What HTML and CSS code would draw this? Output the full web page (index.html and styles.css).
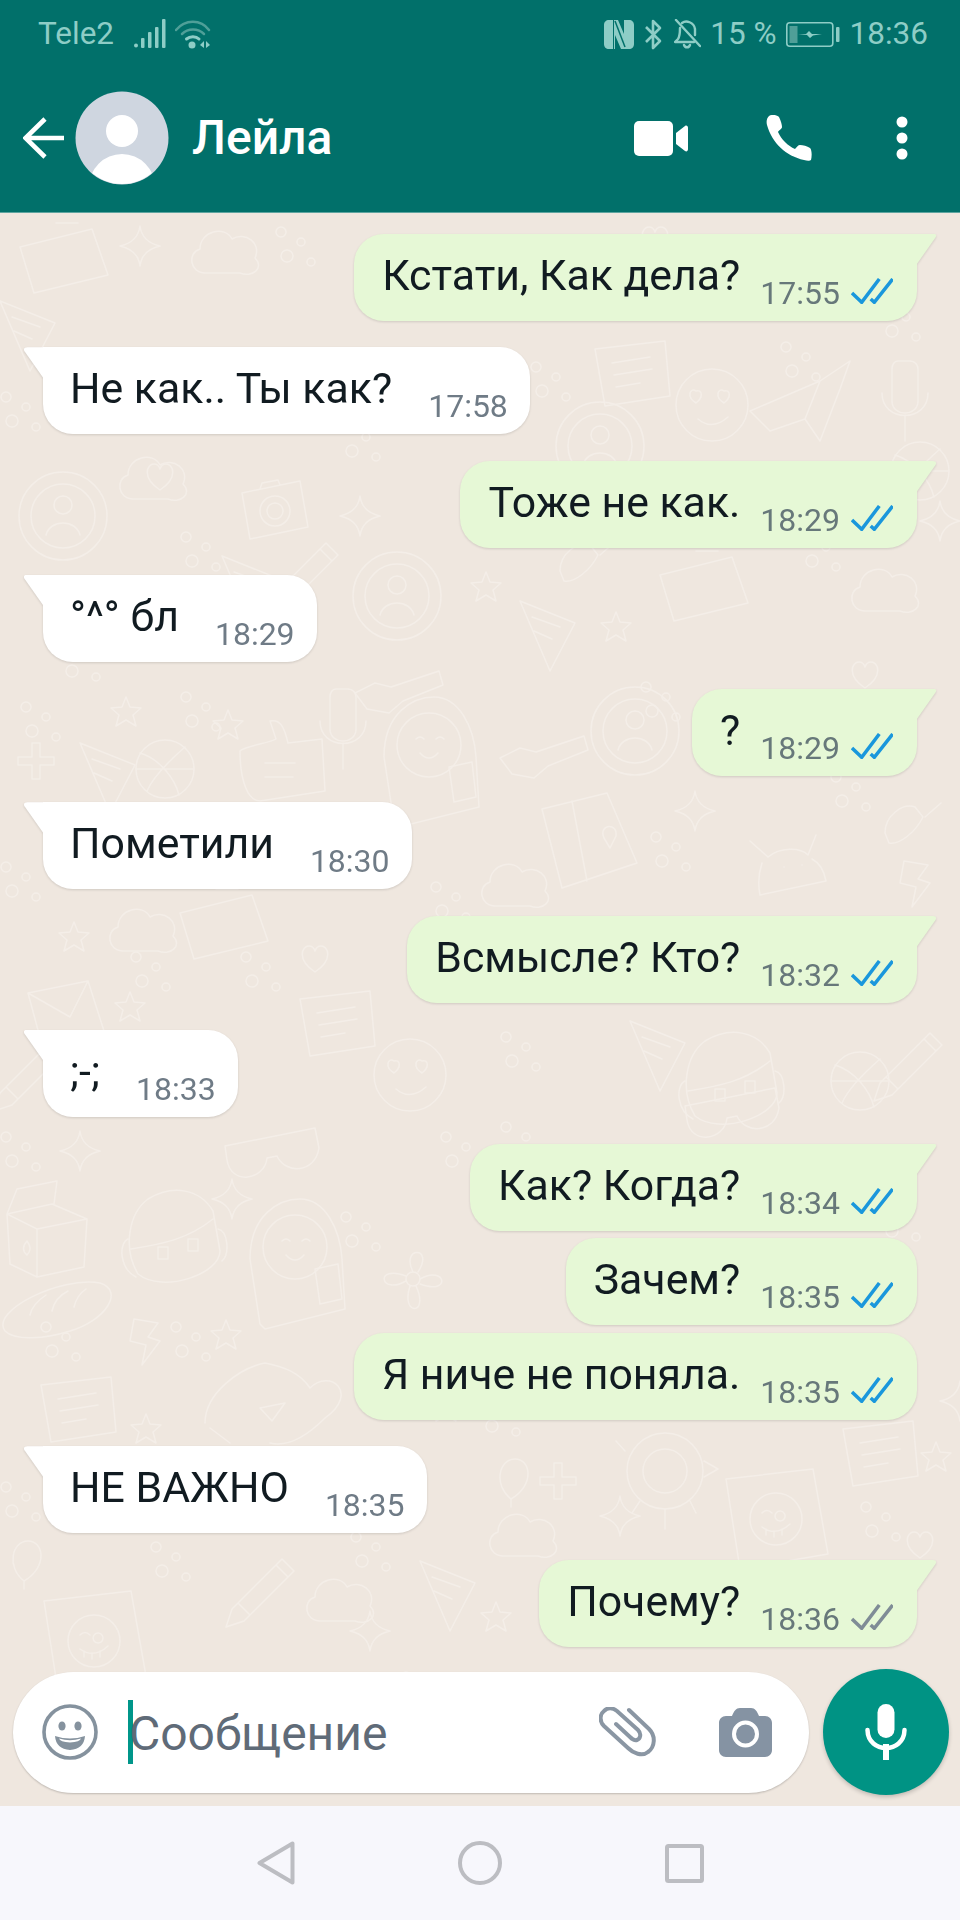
FILE: index.html
```html
<!DOCTYPE html>
<html lang="ru">
<head>
<meta charset="utf-8">
<title>Лейла</title>
<link rel="stylesheet" href="styles.css">
</head>
<body>
<div class="phone">
  <div class="topbar">
    <div class="status">
      <div class="status-left">
        <span>Tele2</span>
        <svg class="ic-signal" width="32" height="30" viewBox="0 0 32 30"><g fill="#8ecdc6"><circle cx="2" cy="26.500" r="2"/><rect x="7" y="19" width="3.500" height="10" rx="1"/><rect x="14" y="13" width="3.500" height="16" rx="1"/><rect x="21" y="8" width="3.500" height="21" rx="1"/><rect x="28" y="0" width="3.500" height="29" rx="1"/></g></svg>
        <svg class="ic-wifi" width="36" height="30" viewBox="0 0 36 30"><g fill="none" stroke-linecap="round"><path d="M1 11 C10 0 26 0 34 11" stroke="#4f9f98" stroke-width="2.500"/><path d="M7 15 C13 9 23 9 29 15" stroke="#4f9f98" stroke-width="2.500"/><path d="M11.500 20 C15 17 21 17 24 20" stroke="#8ecdc6" stroke-width="3"/></g><circle cx="17" cy="26" r="3.500" fill="#8ecdc6"/><path d="M29 22 V29 L25 26 Z M31 29 V22 L35 26 Z" fill="#8ecdc6"/></svg>
      </div>
      <div class="status-right">
        <svg class="ic-nfc" width="30" height="29" viewBox="0 0 30 29"><path d="M5 0 H9 V29 H5 C2 29 0 27 0 24 V5 C0 2 2 0 5 0Z M21 0 H25 C28 0 30 2 30 5 V24 C30 27 28 29 25 29 H21Z" fill="#8ecdc6"/><path d="M10 0 H14 L20 14 V0 H21 V29 H17 L11 15 V29 H10Z" fill="#8ecdc6"/><path d="M11 1 L21 27" stroke="#01706a" stroke-width="1.500"/></svg>
        <svg class="ic-bt" width="19" height="31" viewBox="0 0 19 31"><path d="M2 8 L16 22 L9 29 V2 L16 9 L2 23" fill="none" stroke="#8ecdc6" stroke-width="2.600" stroke-linejoin="round"/></svg>
        <svg class="ic-bell" width="27" height="30" viewBox="0 0 27 30"><g fill="none" stroke="#8ecdc6" stroke-width="2.400" stroke-linecap="round" stroke-linejoin="round"><path d="M6 9 C6 13 6 17 4 20 L1 23 H20"/><path d="M8 4 C12 1 20 3 21 10 V16"/><path d="M2 1 L26 27"/><path d="M10 26 C11 29 15 29 16 26"/></g></svg>
        <span class="pct">15 %</span>
        <svg class="ic-batt" width="54" height="25" viewBox="0 0 54 25"><rect x="0.800" y="0.800" width="46" height="23.400" rx="3" fill="none" stroke="#8ecdc6" stroke-width="1.600"/><rect x="3.500" y="4" width="8" height="17" fill="#4f9f98"/><path d="M12 12 H20 L23 9 L26 12 H36 L27 13.500 L24 16 L21 13 Z" fill="#8ecdc6"/><rect x="50" y="5" width="3.500" height="15" rx="1" fill="#8ecdc6"/></svg>
        <span>18:36</span>
      </div>
    </div>
    <header class="header">
      <svg class="ic-back" width="42" height="42" viewBox="0 0 42 42"><path d="M41 21 H3 M22 2 L2.500 21 L22 40" fill="none" stroke="#fff" stroke-width="4.600"/></svg>
      <svg class="avatar" width="94" height="94" viewBox="0 0 94 94"><defs><clipPath id="avclip"><circle cx="47" cy="47" r="46"/></clipPath></defs><circle cx="47" cy="47" r="46.500" fill="#cfd6e0"/><g clip-path="url(#avclip)" fill="#fff"><circle cx="47" cy="40" r="16"/><ellipse cx="47" cy="96" rx="33" ry="33"/></g></svg>
      <div class="name">Лейла</div>
      <svg class="ic-video" width="54" height="35" viewBox="0 0 54 35"><rect width="39" height="35" rx="5" fill="#fff"/><path d="M42 12 L51 5 C52.500 4 54 5 54 7 V28 C54 30 52.500 31 51 30 L42 23 Z" fill="#fff"/></svg>
      <svg class="ic-call" width="46" height="46" viewBox="0 0 46 46"><path d="M3 1 C6 -1 11 0 13 2 C15 6 16 10 16 12 C16 14 13 15 12 17 C15 24 22 31 29 34 C31 32 32 30 34 30 C37 30 41 31 44 33 C46 35 46 41 45 45 C44 46 41 46 38 45 C20 41 6 28 1 10 C0 6 1 3 3 1 Z" fill="#fff"/></svg>
      <svg class="ic-more" width="12" height="44" viewBox="0 0 12 44"><g fill="#fff"><circle cx="6" cy="6" r="5.500"/><circle cx="6" cy="22" r="5.500"/><circle cx="6" cy="38" r="5.500"/></g></svg>
    </header>
  </div>

  <main class="chat">
    <svg class="wallpaper" width="960" height="1594" viewBox="0 212 960 1594" aria-hidden="true">
      <defs>
        <path id="d-star" d="M16 1 L20 11 L31 12 L23 19 L26 30 L16 24 L6 30 L9 19 L1 12 L12 11Z"/>
        <path id="d-spark" d="M20 0 Q22 16 40 20 Q22 24 20 40 Q18 24 0 20 Q18 16 20 0Z"/>
        <path id="d-heart" d="M15 27 C-4 14 2 1 9 1 C12 1 14 3 15 6 C16 3 18 1 21 1 C28 1 34 14 15 27Z"/>
        <path id="d-cloud" d="M15 50 C0 50 -3 30 10 26 C10 8 35 2 42 16 C55 8 72 20 65 35 C75 45 62 55 50 50 Z"/>
        <path id="d-bolt" d="M4 0 L28 4 L18 18 L30 22 L12 46 L16 26 L0 22Z"/>
        <g id="d-dots"><circle cx="6" cy="6" r="5"/><circle cx="26" cy="16" r="4"/><circle cx="12" cy="30" r="6"/><circle cx="36" cy="36" r="4"/></g>
        <g id="d-carton"><path d="M5 35 L50 25 L85 40 L82 88 L35 98 L8 85Z M5 35 L35 50 L35 98 M35 50 L85 40 M15 10 L55 2 L52 25 M15 10 L5 35 M25 62 q6 8 0 14 q-7-6 0-14"/></g>
        <g id="d-pack"><path d="M10 85 C-5 60 0 25 20 10 C45 -5 72 0 85 22 L92 62 C92 85 35 105 10 85Z M0 50 C-10 55 -8 80 8 88 M90 40 C100 42 102 65 94 72 M3 60 C35 55 60 50 85 30"/><path d="M30 58 h10 v12 h-10z M60 50 h10 v12 h-10z"/></g>
        <g id="d-girl"><path d="M10 125 L0 60 C0 15 30 0 50 0 C75 0 90 30 92 60 L95 110 L15 130Z"/><circle cx="45" cy="48" r="32"/><path d="M32 42 q4-4 8 0 M52 42 q4-4 8 0 M36 56 q9 10 18 0"/><path d="M65 70 L88 65 L92 100 L70 105Z"/></g>
        <g id="d-flower"><circle cx="33" cy="33" r="7"/><path d="M33 26 C20 0 55 0 38 26 M40 33 C66 18 72 50 40 38 M36 40 C50 70 20 70 30 40 M26 35 C0 50 -6 18 26 30"/></g>
        <g id="d-bread"><path d="M5 50 C-10 30 60 -5 100 2 C125 10 105 40 70 50 C45 58 15 60 5 50Z M30 34 C32 24 40 18 46 14 M52 30 C54 20 60 14 68 10 M74 26 C76 18 80 12 86 8"/></g>
        <g id="d-note"><path d="M5 8 L75 0 L80 55 L15 65Z M22 22 L60 16 M24 34 L62 28 M26 46 L50 42"/></g>
        <g id="d-book"><path d="M0 16 L65 0 L95 70 L20 95Z M30 8 L45 88"/><path d="M62 45 c-6 -14 14 -16 12 -2 l-6 12z"/></g>
        <g id="d-thumb"><path d="M0 30 C5 25 30 22 36 18 L30 0 C40 -2 44 5 48 22 L82 18 L85 70 L20 80 C8 80 0 60 0 30Z M25 42 h30 M25 56 h28"/></g>
        <g id="d-mic"><path d="M18 0 h12 c5 0 8 4 8 8 v32 c0 16 -26 16 -26 0 v-32 c0 -4 2 -8 6 -8z"/><path d="M2 32 C2 62 48 62 48 32 M25 54 V80"/></g>
        <g id="d-plate"><circle cx="45" cy="45" r="44"/><circle cx="45" cy="45" r="32"/><circle cx="45" cy="34" r="9"/><path d="M28 64 C32 48 58 48 62 64"/></g>
        <g id="d-camera"><path d="M2 14 L60 2 L68 48 L10 60Z M20 10 L22 4 L38 1 L40 6"/><circle cx="35" cy="32" r="15"/><circle cx="35" cy="32" r="8"/></g>
        <g id="d-pencil"><path d="M0 52 L50 2 L62 14 L12 64 L-6 70Z M44 8 L56 20 M6 46 L18 58"/></g>
        <g id="d-heartface"><circle cx="40" cy="42" r="36"/><path d="M24 28 c-6 -4 -10 6 0 12 c8 -6 6 -14 0 -12z M52 28 c-6 -4 -10 6 0 12 c8 -6 6 -14 0 -12z M26 56 q14 12 30 -2"/></g>
        <g id="d-glasses"><path d="M0 20 L90 2 L94 22 C90 48 60 48 52 30 L42 32 C40 54 6 60 2 34Z"/></g>
        <g id="d-ball"><circle cx="30" cy="30" r="29"/><path d="M5 14 C25 20 40 40 44 56 M50 8 C34 22 18 38 12 52 M1 30 L58 30"/></g>
        <g id="d-turtle"><circle cx="45" cy="40" r="22"/><circle cx="45" cy="40" r="38"/><path d="M5 20 L-4 10 M84 30 L98 38 L84 46 M45 78 V98 M20 70 L12 82 M70 70 L76 82"/></g>
        <g id="d-frame"><path d="M8 10 L95 0 L110 85 L22 100Z"/><circle cx="58" cy="50" r="26"/><path d="M44 44 q5 -5 10 0 M62 42 a5 5 0 1 0 .1 0 M44 58 q14 10 28 -3 M48 60 v6 M56 62 v6 M64 60 v6"/></g>
        <g id="d-android"><path d="M0 0 L18 16 C30 6 50 6 58 14 L66 -6 M12 22 C8 34 8 44 10 54 L76 40 C74 30 70 22 62 18 M34 26 h.1 M52 24 h.1"/></g>
        <g id="d-envelope"><path d="M0 12 L60 0 L76 50 L14 64Z M0 12 L42 36 L60 0"/></g>
        <g id="d-mail"><path d="M0 24 L72 6 L88 52 L14 70Z M36 0 h22"/></g>
        <g id="d-balloon"><path d="M14 40 C-4 26 2 0 18 0 C34 0 38 26 14 40Z M14 40 V48"/></g>
        <g id="d-cross"><path d="M14 0 h8 v14 h14 v8 h-14 v14 h-8 v-14 h-14 v-8 h14z"/></g>
        <g id="d-hand"><path d="M5 60 C5 30 40 5 65 0 C85 4 100 10 110 25 C130 5 160 30 125 55 C110 70 90 85 70 80 M10 65 L30 80 M60 45 L85 40 L72 58Z"/></g>
        <g id="d-slice"><path d="M0 0 L55 22 L30 70 Z M12 16 L40 26 M14 30 L32 38"/></g>
        <g id="d-plane"><path d="M0 50 L70 20 L100 0 L90 28 L70 80 L55 58 L20 70Z M55 58 L70 20"/></g>
        <g id="d-key"><path d="M0 22 L20 12 L36 16 L84 0 L88 14 L48 30 L34 42 L12 38Z"/></g>
        <g id="d-brush"><path d="M0 30 C0 12 18 0 30 4 L38 14 C30 30 14 42 4 40Z M40 14 L56 0"/></g>
      </defs>
      <g class="doodles">
        <use href="#d-mail" x="20" y="222"/>
        <use href="#d-spark" x="120" y="225"/>
        <use href="#d-cloud" x="190" y="222"/>
        <use href="#d-dots" x="275" y="225"/>
        <use href="#d-star" x="420" y="235"/>
        <use href="#d-heart" x="640" y="225"/>
        <use href="#d-dots" x="780" y="340"/>
        <use href="#d-slice" x="0" y="300"/>
        <use href="#d-dots" x="0" y="390"/>
        <use href="#d-ball" x="890" y="440"/>
        <use href="#d-dots" x="340" y="420"/>
        <use href="#d-brush" x="560" y="540"/>
        <use href="#d-star" x="600" y="610"/>
        <use href="#d-dots" x="640" y="680"/>
        <use href="#d-dots" x="800" y="530"/>
        <use href="#d-heart" x="850" y="660"/>
        <use href="#d-cloud" x="850" y="560"/>
        <use href="#d-dots" x="430" y="880"/>
        <use href="#d-bolt" x="900" y="860"/>
        <use href="#d-dots" x="0" y="860"/>
        <use href="#d-pencil" x="0" y="1040"/>
        <use href="#d-dots" x="0" y="1130"/>
        <use href="#d-dots" x="440" y="1130"/>
        <use href="#d-dots" x="500" y="1120"/>
        <use href="#d-star" x="430" y="1390"/>
        <use href="#d-dots" x="480" y="1395"/>
        <use href="#d-star" x="920" y="1440"/>
        <use href="#d-dots" x="0" y="1480"/>
        <use href="#d-balloon" x="10" y="1540"/>
        <use href="#d-dots" x="150" y="1540"/>
        <use href="#d-star" x="480" y="1600"/>
        <use href="#d-carton" x="2" y="1178"/>
        <use href="#d-pack" x="128" y="1188"/>
        <use href="#d-girl" x="250" y="1198"/>
        <use href="#d-flower" x="380" y="1245"/>
        <use href="#d-bread" x="0" y="1280"/>
        <use href="#d-bolt" x="130" y="1318"/>
        <use href="#d-star" x="210" y="1318"/>
        <use href="#d-spark" x="212" y="1178"/>
        <use href="#d-note" x="36" y="1376"/>
        <use href="#d-hand" x="200" y="1362"/>
        <use href="#d-pencil" x="232" y="1556"/>
        <use href="#d-cloud" x="305" y="1570"/>
        <use href="#d-spark" x="350" y="1610"/>
        <use href="#d-frame" x="36" y="1590"/>
        <use href="#d-slice" x="420" y="1560"/>
        <use href="#d-star" x="130" y="1412"/>
        <use href="#d-dots" x="40" y="1320"/>
        <use href="#d-dots" x="340" y="1210"/>
        <use href="#d-dots" x="170" y="1320"/>
        <use href="#d-dots" x="350" y="1530"/>
        <use href="#d-star" x="110" y="695"/>
        <use href="#d-star" x="212" y="708"/>
        <use href="#d-slice" x="80" y="742"/>
        <use href="#d-ball" x="135" y="738"/>
        <use href="#d-mic" x="318" y="688"/>
        <use href="#d-thumb" x="240" y="720"/>
        <use href="#d-girl" x="384" y="696"/>
        <use href="#d-cross" x="18" y="742"/>
        <use href="#d-dots" x="20" y="700"/>
        <use href="#d-dots" x="180" y="690"/>
        <use href="#d-cloud" x="108" y="900"/>
        <use href="#d-mail" x="180" y="888"/>
        <use href="#d-star" x="58" y="920"/>
        <use href="#d-heart" x="300" y="944"/>
        <use href="#d-envelope" x="28" y="980"/>
        <use href="#d-star" x="114" y="990"/>
        <use href="#d-note" x="295" y="990"/>
        <use href="#d-heartface" x="370" y="1032"/>
        <use href="#d-dots" x="130" y="950"/>
        <use href="#d-dots" x="240" y="950"/>
        <use href="#d-glasses" x="225" y="1125"/>
        <use href="#d-spark" x="60" y="1130"/>
        <use href="#d-plate" x="18" y="470"/>
        <use href="#d-camera" x="240" y="478"/>
        <use href="#d-cloud" x="118" y="448"/>
        <use href="#d-heart" x="145" y="462"/>
        <use href="#d-spark" x="340" y="495"/>
        <use href="#d-pencil" x="276" y="540"/>
        <use href="#d-slice" x="222" y="555"/>
        <use href="#d-plate" x="352" y="550"/>
        <use href="#d-star" x="470" y="570"/>
        <use href="#d-slice" x="520" y="600"/>
        <use href="#d-key" x="355" y="670"/>
        <use href="#d-dots" x="180" y="530"/>
        <use href="#d-dots" x="60" y="640"/>
        <use href="#d-heartface" x="672" y="362"/>
        <use href="#d-plane" x="750" y="360"/>
        <use href="#d-plate" x="555" y="400"/>
        <use href="#d-note" x="590" y="340"/>
        <use href="#d-dots" x="880" y="300"/>
        <use href="#d-dots" x="530" y="360"/>
        <use href="#d-mic" x="880" y="360"/>
        <use href="#d-spark" x="920" y="500"/>
        <use href="#d-mail" x="660" y="550"/>
        <use href="#d-ball" x="720" y="470"/>
        <use href="#d-book" x="542" y="792"/>
        <use href="#d-cloud" x="480" y="855"/>
        <use href="#d-android" x="750" y="840"/>
        <use href="#d-brush" x="885" y="802"/>
        <use href="#d-plate" x="590" y="685"/>
        <use href="#d-key" x="500" y="735"/>
        <use href="#d-spark" x="675" y="790"/>
        <use href="#d-dots" x="650" y="830"/>
        <use href="#d-dots" x="830" y="770"/>
        <use href="#d-pack" x="685" y="1030"/>
        <use href="#d-glasses" x="685" y="1085"/>
        <use href="#d-ball" x="830" y="1050"/>
        <use href="#d-slice" x="630" y="1020"/>
        <use href="#d-dots" x="500" y="1030"/>
        <use href="#d-pencil" x="880" y="1030"/>
        <use href="#d-turtle" x="620" y="1430"/>
        <use href="#d-note" x="838" y="1420"/>
        <use href="#d-frame" x="718" y="1468"/>
        <use href="#d-cross" x="540" y="1462"/>
        <use href="#d-balloon" x="497" y="1458"/>
        <use href="#d-cloud" x="488" y="1505"/>
        <use href="#d-spark" x="600" y="1495"/>
        <use href="#d-dots" x="860" y="1500"/>
        <use href="#d-heart" x="905" y="1530"/>
        <use href="#d-spark" x="940" y="1380"/>
        <use href="#d-dots" x="400" y="1670"/>
        <use href="#d-dots" x="880" y="1200"/>
      </g>
    </svg>

    <div class="messages">
      <div class="msg out tail"><span class="text">Кстати, Как дела?</span><span class="time">17:55</span><svg class="ticks read" width="42" height="26" viewBox="0 0 42 26"><path d="M1 15 L10.700 24.300 L28.300 1 M19.700 21 L23.300 24.300 L41.700 1"/></svg></div>
      <div class="msg in tail"><span class="text">Не как.. Ты как?</span><span class="time">17:58</span></div>
      <div class="msg out tail"><span class="text">Тоже не как.</span><span class="time">18:29</span><svg class="ticks read" width="42" height="26" viewBox="0 0 42 26"><path d="M1 15 L10.700 24.300 L28.300 1 M19.700 21 L23.300 24.300 L41.700 1"/></svg></div>
      <div class="msg in tail"><span class="text">°^° бл</span><span class="time">18:29</span></div>
      <div class="msg out tail"><span class="text">?</span><span class="time">18:29</span><svg class="ticks read" width="42" height="26" viewBox="0 0 42 26"><path d="M1 15 L10.700 24.300 L28.300 1 M19.700 21 L23.300 24.300 L41.700 1"/></svg></div>
      <div class="msg in tail"><span class="text">Пометили</span><span class="time">18:30</span></div>
      <div class="msg out tail"><span class="text">Всмысле? Кто?</span><span class="time">18:32</span><svg class="ticks read" width="42" height="26" viewBox="0 0 42 26"><path d="M1 15 L10.700 24.300 L28.300 1 M19.700 21 L23.300 24.300 L41.700 1"/></svg></div>
      <div class="msg in tail"><span class="text">;-;</span><span class="time">18:33</span></div>
      <div class="msg out tail"><span class="text">Как? Когда?</span><span class="time">18:34</span><svg class="ticks read" width="42" height="26" viewBox="0 0 42 26"><path d="M1 15 L10.700 24.300 L28.300 1 M19.700 21 L23.300 24.300 L41.700 1"/></svg></div>
      <div class="msg out cont"><span class="text">Зачем?</span><span class="time">18:35</span><svg class="ticks read" width="42" height="26" viewBox="0 0 42 26"><path d="M1 15 L10.700 24.300 L28.300 1 M19.700 21 L23.300 24.300 L41.700 1"/></svg></div>
      <div class="msg out cont"><span class="text">Я ниче не поняла.</span><span class="time">18:35</span><svg class="ticks read" width="42" height="26" viewBox="0 0 42 26"><path d="M1 15 L10.700 24.300 L28.300 1 M19.700 21 L23.300 24.300 L41.700 1"/></svg></div>
      <div class="msg in tail"><span class="text">НЕ ВАЖНО</span><span class="time">18:35</span></div>
      <div class="msg out tail"><span class="text">Почему?</span><span class="time">18:36</span><svg class="ticks sent" width="42" height="26" viewBox="0 0 42 26"><path d="M1 15 L10.700 24.300 L28.300 1 M19.700 21 L23.300 24.300 L41.700 1"/></svg></div>
    </div>

    <div class="composer">
      <div class="input">
        <svg class="ic-emoji" width="56" height="56" viewBox="0 0 56 56"><circle cx="28" cy="28" r="26" fill="none" stroke="#85929e" stroke-width="3.600"/><ellipse cx="20" cy="22" rx="3.600" ry="4.600" fill="#85929e"/><ellipse cx="36" cy="22" rx="3.600" ry="4.600" fill="#85929e"/><path d="M13 32 Q28 37 43 32 Q42 45 28 46 Q14 45 13 32Z" fill="#85929e"/><path d="M17 34.500 Q28 38 39 34.500 Q38 38 28 38.500 Q18 38 17 34.500Z" fill="#fff"/></svg>
        <span class="caret"></span>
        <span class="placeholder">Сообщение</span>
        <svg class="ic-clip" width="57" height="50" viewBox="0 0 57 50"><path d="M30 3 L50 22 C57 29 56 40 49 45 C43 50 34 46 29 41 L5 19 C0 14 1 7 5 4 C9 0 14 1 18 4 L39 23 C43 27 41 32 38 33 C35 34 33 32 31 30 L17 17" fill="none" stroke="#8a96a3" stroke-width="4" stroke-linecap="round"/></svg>
        <svg class="ic-cam" width="53" height="49" viewBox="0 0 53 49"><path d="M7 8 H13 C15 3 17 0 21 0 H32 C36 0 38 3 40 8 H46 C50 8 53 11 53 15 V42 C53 46 50 49 46 49 H7 C3 49 0 46 0 42 V15 C0 11 3 8 7 8Z" fill="#8593a3"/><circle cx="26.500" cy="26" r="11.500" fill="none" stroke="#fff" stroke-width="4"/></svg>
      </div>
      <div class="mic">
        <svg width="42" height="56" viewBox="0 0 42 56"><rect x="12.500" y="0" width="17" height="34" rx="8.500" fill="#fff"/><path d="M2.500 26 C3 50 39 50 39.500 26" fill="none" stroke="#fff" stroke-width="4.500" stroke-linecap="round"/><rect x="18" y="40" width="6" height="16" fill="#fff"/></svg>
      </div>
    </div>
  </main>

  <nav class="navbar">
    <svg width="38" height="44" viewBox="0 0 38 44"><path d="M35.500 2.500 V41.500 L2.500 22 Z" fill="none" stroke="#bcbdc2" stroke-width="4" stroke-linejoin="round"/></svg>
    <svg width="44" height="44" viewBox="0 0 44 44"><circle cx="22" cy="22" r="20" fill="none" stroke="#bcbdc2" stroke-width="4"/></svg>
    <svg width="39" height="39" viewBox="0 0 39 39"><rect x="2" y="2" width="35" height="35" rx="1.500" fill="none" stroke="#bcbdc2" stroke-width="4"/></svg>
  </nav>
</div>
</body>
</html>
```

FILE: styles.css
```css
* { box-sizing: border-box; }

html, body {
  margin: 0;
  padding: 0;
  background: #efe7df;
}

body {
  font-family: Roboto, "Noto Sans", sans-serif;
}

svg { display: block; flex: none; }

.phone {
  width: 960px;
  height: 1920px;
  display: flex;
  flex-direction: column;
  overflow: hidden;
}

/* top */
.topbar {
  background: #01706a;
  height: 213px;
  flex: none;
  display: flex;
  flex-direction: column;
  border-bottom: 1px solid #5ea5a0;
}

.status {
  height: 64px;
  display: flex;
  justify-content: space-between;
  align-items: flex-start;
  padding: 16px 32px 0 38px;
  color: #8ecdc6;
  font-size: 31.500px;
  line-height: 36px;
}

.status-left,
.status-right {
  display: flex;
  align-items: center;
}

.ic-signal { margin-left: 20px; }
.ic-wifi { margin-left: 9px; }
.ic-bt { margin-left: 10px; }
.ic-bell { margin-left: 11px; }
.pct { margin-left: 9px; }
.ic-batt { margin-left: 9px; }
.status-right > span:last-child { margin-left: 10px; }

.header {
  flex: 1;
  display: flex;
  align-items: center;
  padding-left: 23px;
  color: #fff;
}

.avatar { margin-left: 10px; }

.name {
  margin-left: 23px;
  font-size: 48px;
  line-height: 56px;
  font-weight: 500;
  flex: 1;
}

.ic-call { margin-left: 78px; }
.ic-more { margin-left: 84px; margin-right: 52px; }

/* chat */
.chat {
  position: relative;
  flex: 1;
  display: flex;
  flex-direction: column;
  background: #efe7df;
}

.wallpaper {
  position: absolute;
  left: 0;
  top: 0;
}

.doodles {
  fill: none;
  stroke: #f4eee8;
  stroke-width: 1.500;
  stroke-linecap: round;
  stroke-linejoin: round;
}

.messages {
  position: relative;
  flex: 1;
  display: flex;
  flex-direction: column;
  padding: 20.500px 43px 0;
}

.msg {
  position: relative;
  display: flex;
  align-items: flex-start;
  height: 87px;
  margin-top: 26.750px;
  border-radius: 30px;
  filter: drop-shadow(0 1px 1px rgba(0, 0, 0, 0.13));
}

.msg:first-child { margin-top: 0; }
.msg.cont { margin-top: 7.500px; }

.msg.out {
  align-self: flex-end;
  background: #e6f8d6;
  padding: 16px 24px 0 28px;
}

.msg.in {
  align-self: flex-start;
  background: #fff;
  padding: 16px 22px 0 27px;
}

.msg.out.tail { border-top-right-radius: 0; }
.msg.in.tail { border-top-left-radius: 0; }

.msg.tail::after {
  content: "";
  position: absolute;
  top: 0;
  width: 20px;
  height: 32px;
}

.msg.out.tail::after {
  right: -19.500px;
  background: #e6f8d6;
  clip-path: path("M0 0 H16 Q21 0 19 4 L0 31 Z");
}

.msg.in.tail::after {
  left: -19.500px;
  background: #fff;
  clip-path: path("M20 0 H4 Q-1 0 1 4 L20 31 Z");
}

.text {
  font-size: 42.800px;
  line-height: 50px;
  color: #111b21;
  white-space: nowrap;
}

.time {
  margin-top: 24px;
  font-size: 32px;
  line-height: 38px;
  color: #6f7b86;
  white-space: nowrap;
}

.msg.in .time { margin-left: 36px; }

.msg.out .time {
  margin-left: 20px;
  color: #67787a;
}

.ticks {
  margin-left: 11px;
  margin-top: 28px;
  fill: none;
  stroke-width: 3.500;
}

.ticks.read { stroke: #1a97dc; }
.ticks.sent { stroke: #7f8c96; }

/* composer */
.composer {
  position: relative;
  display: flex;
  align-items: center;
  padding: 0 11px 11px 13px;
  gap: 14px;
}

.input {
  flex: 1;
  height: 121px;
  background: #fff;
  border-radius: 60.500px;
  display: flex;
  align-items: center;
  padding: 0 37px 0 29px;
  box-shadow: 0 1px 2px rgba(0, 0, 0, 0.2);
}

.caret {
  width: 5px;
  height: 64px;
  margin-left: 30px;
  background: #00968a;
  flex: none;
}

.placeholder {
  flex: 1;
  font-size: 48px;
  line-height: 56px;
  color: #5f6b78;
  margin: 3px 0 0 -4px;
}

.ic-cam { margin-left: 63px; }

.mic {
  width: 126px;
  height: 126px;
  border-radius: 50%;
  background: #009384;
  display: flex;
  align-items: center;
  justify-content: center;
  box-shadow: 0 2px 4px rgba(0, 0, 0, 0.2);
  flex: none;
}

/* nav */
.navbar {
  height: 114px;
  flex: none;
  background: #f7f7fc;
  display: flex;
  align-items: center;
  justify-content: center;
  gap: 163px;
}
```
